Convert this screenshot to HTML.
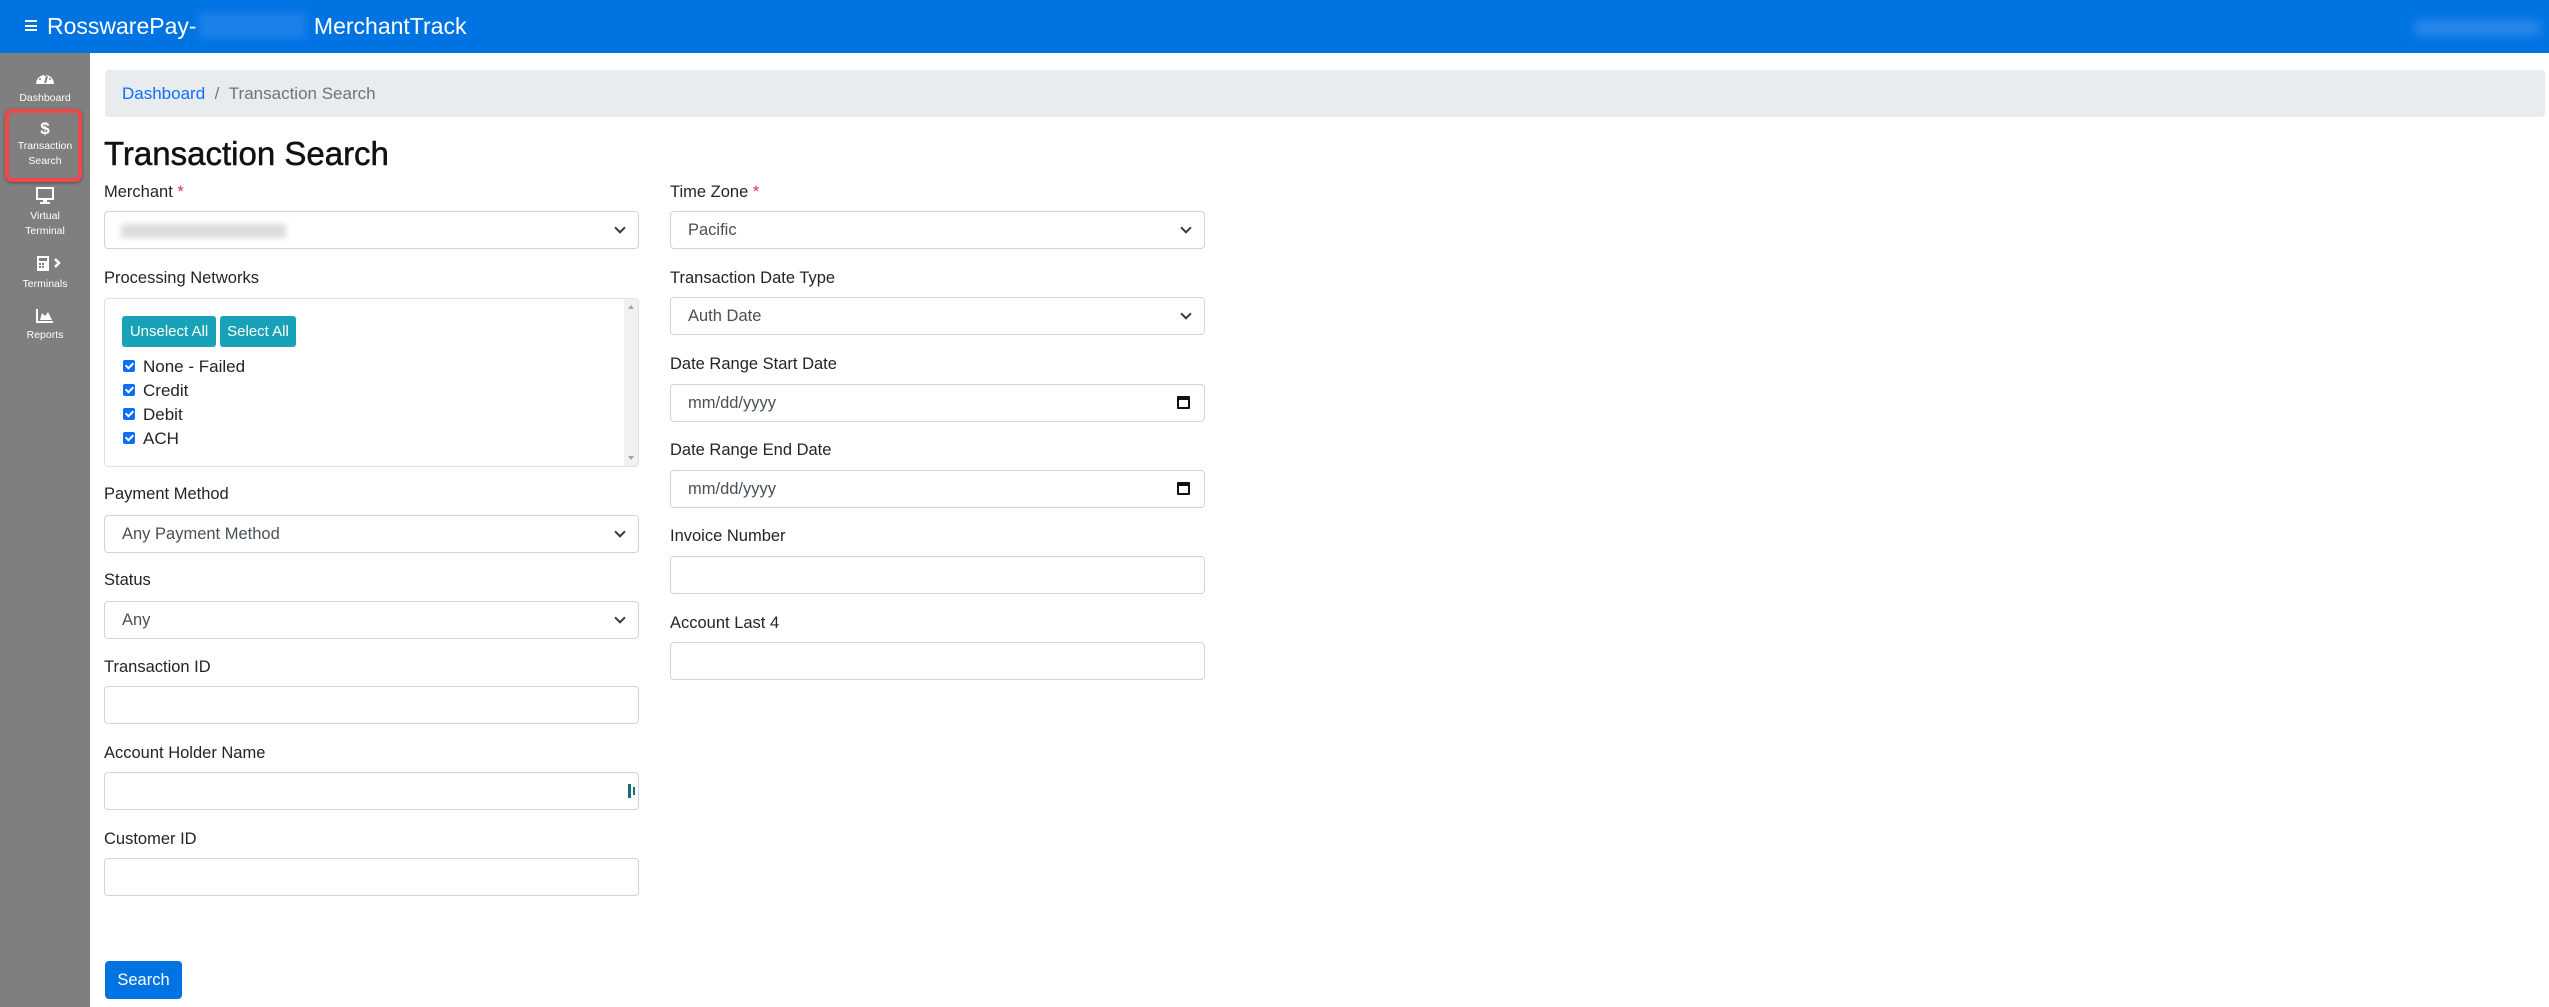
<!DOCTYPE html>
<html><head><meta charset="utf-8"><style>
*{box-sizing:border-box;margin:0;padding:0}
body{width:2549px;height:1007px;overflow:hidden;background:#fff;font-family:"Liberation Sans",sans-serif;color:#212529;position:relative}
.hdr{position:absolute;left:0;top:0;width:2549px;height:53px;background:#0073e3;color:#fff}
.hdr .t{position:absolute;left:47px;top:12px;font-size:23px;line-height:28px}
.ham{position:absolute;left:25px;top:20px;width:12px;height:11px;border-top:2.5px solid #fff;border-bottom:2.5px solid #fff}
.ham:after{content:"";position:absolute;left:0;top:2.5px;width:12px;height:2.5px;background:#fff}
.blur{display:inline-block;width:107px;height:27px;background:#1a80ea;vertical-align:-5px;margin:0 2px;filter:blur(4px)}
.blur2{position:absolute;left:2415px;top:20px;width:125px;height:16px;background:#2a87ea;filter:blur(5px)}
.side{position:absolute;left:0;top:53px;width:90px;height:954px;background:#7f7f7f}
.si{position:absolute;left:0;width:90px;text-align:center;color:#fff;font-size:10.5px;line-height:15px}
.red{position:absolute;left:5px;top:56px;width:77px;height:73px;border:4px solid #f04848;border-radius:7px;box-shadow:0 1px 3px rgba(0,0,0,.4)}
.bc{position:absolute;left:105px;top:70px;width:2440px;height:47px;background:#e9ecef;border-radius:4px;font-size:17px;line-height:47px;padding-left:17px;color:#6c757d}
.bc a{color:#0d6efd;text-decoration:none}
h1{position:absolute;left:104px;top:134px;font-size:33px;font-weight:normal;line-height:40px;color:#111;-webkit-text-stroke:0.5px #111}
.lbl{position:absolute;font-size:16.5px;line-height:20px;color:#212529}
.lbl span{color:#dc3545}
.in{position:absolute;width:535px;height:38px;border:1px solid #ced4da;border-radius:4px;background:#fff;font-size:16.5px;line-height:36px;padding-left:17px;color:#495057}
.sel:after{content:"";position:absolute;right:14px;top:12px;width:6px;height:6px;border-right:2px solid #343a40;border-bottom:2px solid #343a40;transform:rotate(45deg)}
.cal{position:absolute;right:14px;top:11px;width:13px;height:13px;border:2px solid #111;border-top-width:4px;border-radius:1px}
.box{position:absolute;left:104px;top:298px;width:535px;height:169px;border:1px solid #dee2e6;border-radius:4px}
.sb{position:absolute;right:0;top:0;width:14px;height:167px;background:#f1f1f1}
.btn{position:absolute;top:17px;height:31px;background:#17a2b8;color:#fff;border-radius:3px;font-size:15px;line-height:31px;text-align:center}
.cb{position:absolute;left:18px;font-size:17px;line-height:22px;color:#212529}
.cb i{display:inline-block;width:12px;height:12px;background:#0d6efd;border-radius:2px;margin-right:8px;vertical-align:0;position:relative}
.cb i:after{content:"";position:absolute;left:4px;top:1px;width:3px;height:6px;border-right:2px solid #fff;border-bottom:2px solid #fff;transform:rotate(45deg)}
.go{position:absolute;left:105px;top:961px;width:77px;height:38px;background:#0073e3;color:#fff;border-radius:4px;font-size:16.5px;line-height:38px;text-align:center}
</style></head><body>
<div class="hdr"><div class="ham"></div><div class="t">RosswarePay-<span class="blur"></span> MerchantTrack</div><div class="blur2"></div></div>
<div class="side">
<div class="si" style="top:17px"><svg width="20" height="16" viewBox="0 0 20 16"><path d="M1 14 A9 9 0 1 1 19 14 Z" fill="#fff"/><path d="M10 13 L12 6" stroke="#7f7f7f" stroke-width="2"/><circle cx="5" cy="9" r="1" fill="#7f7f7f"/><circle cx="15" cy="9" r="1" fill="#7f7f7f"/><circle cx="10" cy="5" r="1" fill="#7f7f7f"/></svg><br>Dashboard</div>
<div class="red"></div>
<div class="si" style="top:66px"><span style="font-size:17px;font-weight:bold;line-height:20px">$</span><br>Transaction<br>Search</div>
<div class="si" style="top:134px"><svg width="18" height="17" viewBox="0 0 18 17"><rect x="1" y="1" width="16" height="11" fill="none" stroke="#fff" stroke-width="2"/><rect x="7" y="12" width="4" height="3" fill="#fff"/><rect x="4" y="15" width="10" height="2" fill="#fff"/></svg><br>Virtual<br>Terminal</div>
<div class="si" style="top:202px"><svg width="40" height="17" viewBox="0 0 40 17"><rect x="12" y="1" width="12" height="15" fill="#fff"/><rect x="14" y="3" width="8" height="3" fill="#7f7f7f"/><rect x="14" y="8" width="2" height="2" fill="#7f7f7f"/><rect x="17" y="8" width="2" height="2" fill="#7f7f7f"/><rect x="14" y="11" width="2" height="2" fill="#7f7f7f"/><rect x="17" y="11" width="2" height="2" fill="#7f7f7f"/><path d="M30 4 L34 8 L30 12" stroke="#fff" stroke-width="2.5" fill="none"/></svg><br>Terminals</div>
<div class="si" style="top:255px"><svg width="18" height="15" viewBox="0 0 18 15"><path d="M1 1 V14 H17" stroke="#fff" stroke-width="2" fill="none"/><path d="M4 12 L6 5 L9 8 L12 4 L16 12 Z" fill="#fff"/></svg><br>Reports</div>
</div>
<div class="bc"><a>Dashboard</a>&nbsp; / &nbsp;Transaction Search</div>
<h1>Transaction Search</h1>

<div class="lbl" style="left:104px;top:182px">Merchant <span>*</span></div>
<div class="in sel" style="left:104px;top:211px"><div style="position:absolute;left:16px;top:12px;width:165px;height:14px;background:#dcdcdc;filter:blur(3px)"></div></div>
<div class="lbl" style="left:104px;top:268px">Processing Networks</div>
<div class="box"><div class="sb"><div style="position:absolute;left:4px;top:6px;border:3px solid transparent;border-bottom:4px solid #a3a3a3;border-top:0"></div><div style="position:absolute;left:4px;bottom:6px;border:3px solid transparent;border-top:4px solid #a3a3a3;border-bottom:0"></div></div>
<div class="btn" style="left:17px;width:94px">Unselect All</div>
<div class="btn" style="left:115px;width:76px">Select All</div>
<div class="cb" style="top:57px"><i></i>None - Failed</div>
<div class="cb" style="top:81px"><i></i>Credit</div>
<div class="cb" style="top:105px"><i></i>Debit</div>
<div class="cb" style="top:129px"><i></i>ACH</div>
</div>
<div class="lbl" style="left:104px;top:484px">Payment Method</div>
<div class="in sel" style="left:104px;top:515px">Any Payment Method</div>
<div class="lbl" style="left:104px;top:570px">Status</div>
<div class="in sel" style="left:104px;top:601px">Any</div>
<div class="lbl" style="left:104px;top:657px">Transaction ID</div>
<div class="in" style="left:104px;top:686px"></div>
<div class="lbl" style="left:104px;top:743px">Account Holder Name</div>
<div class="in" style="left:104px;top:772px"><div style="position:absolute;right:7px;top:11px;width:3px;height:14px;background:#1a6a80"></div><div style="position:absolute;right:3px;top:14px;width:2px;height:8px;background:#1a6a80"></div></div>
<div class="lbl" style="left:104px;top:829px">Customer ID</div>
<div class="in" style="left:104px;top:858px"></div>

<div class="lbl" style="left:670px;top:182px">Time Zone <span>*</span></div>
<div class="in sel" style="left:670px;top:211px">Pacific</div>
<div class="lbl" style="left:670px;top:268px">Transaction Date Type</div>
<div class="in sel" style="left:670px;top:297px">Auth Date</div>
<div class="lbl" style="left:670px;top:354px">Date Range Start Date</div>
<div class="in" style="left:670px;top:384px">mm/dd/yyyy<div class="cal"></div></div>
<div class="lbl" style="left:670px;top:440px">Date Range End Date</div>
<div class="in" style="left:670px;top:470px">mm/dd/yyyy<div class="cal"></div></div>
<div class="lbl" style="left:670px;top:526px">Invoice Number</div>
<div class="in" style="left:670px;top:556px"></div>
<div class="lbl" style="left:670px;top:613px">Account Last 4</div>
<div class="in" style="left:670px;top:642px"></div>

<div class="go">Search</div>
</body></html>
